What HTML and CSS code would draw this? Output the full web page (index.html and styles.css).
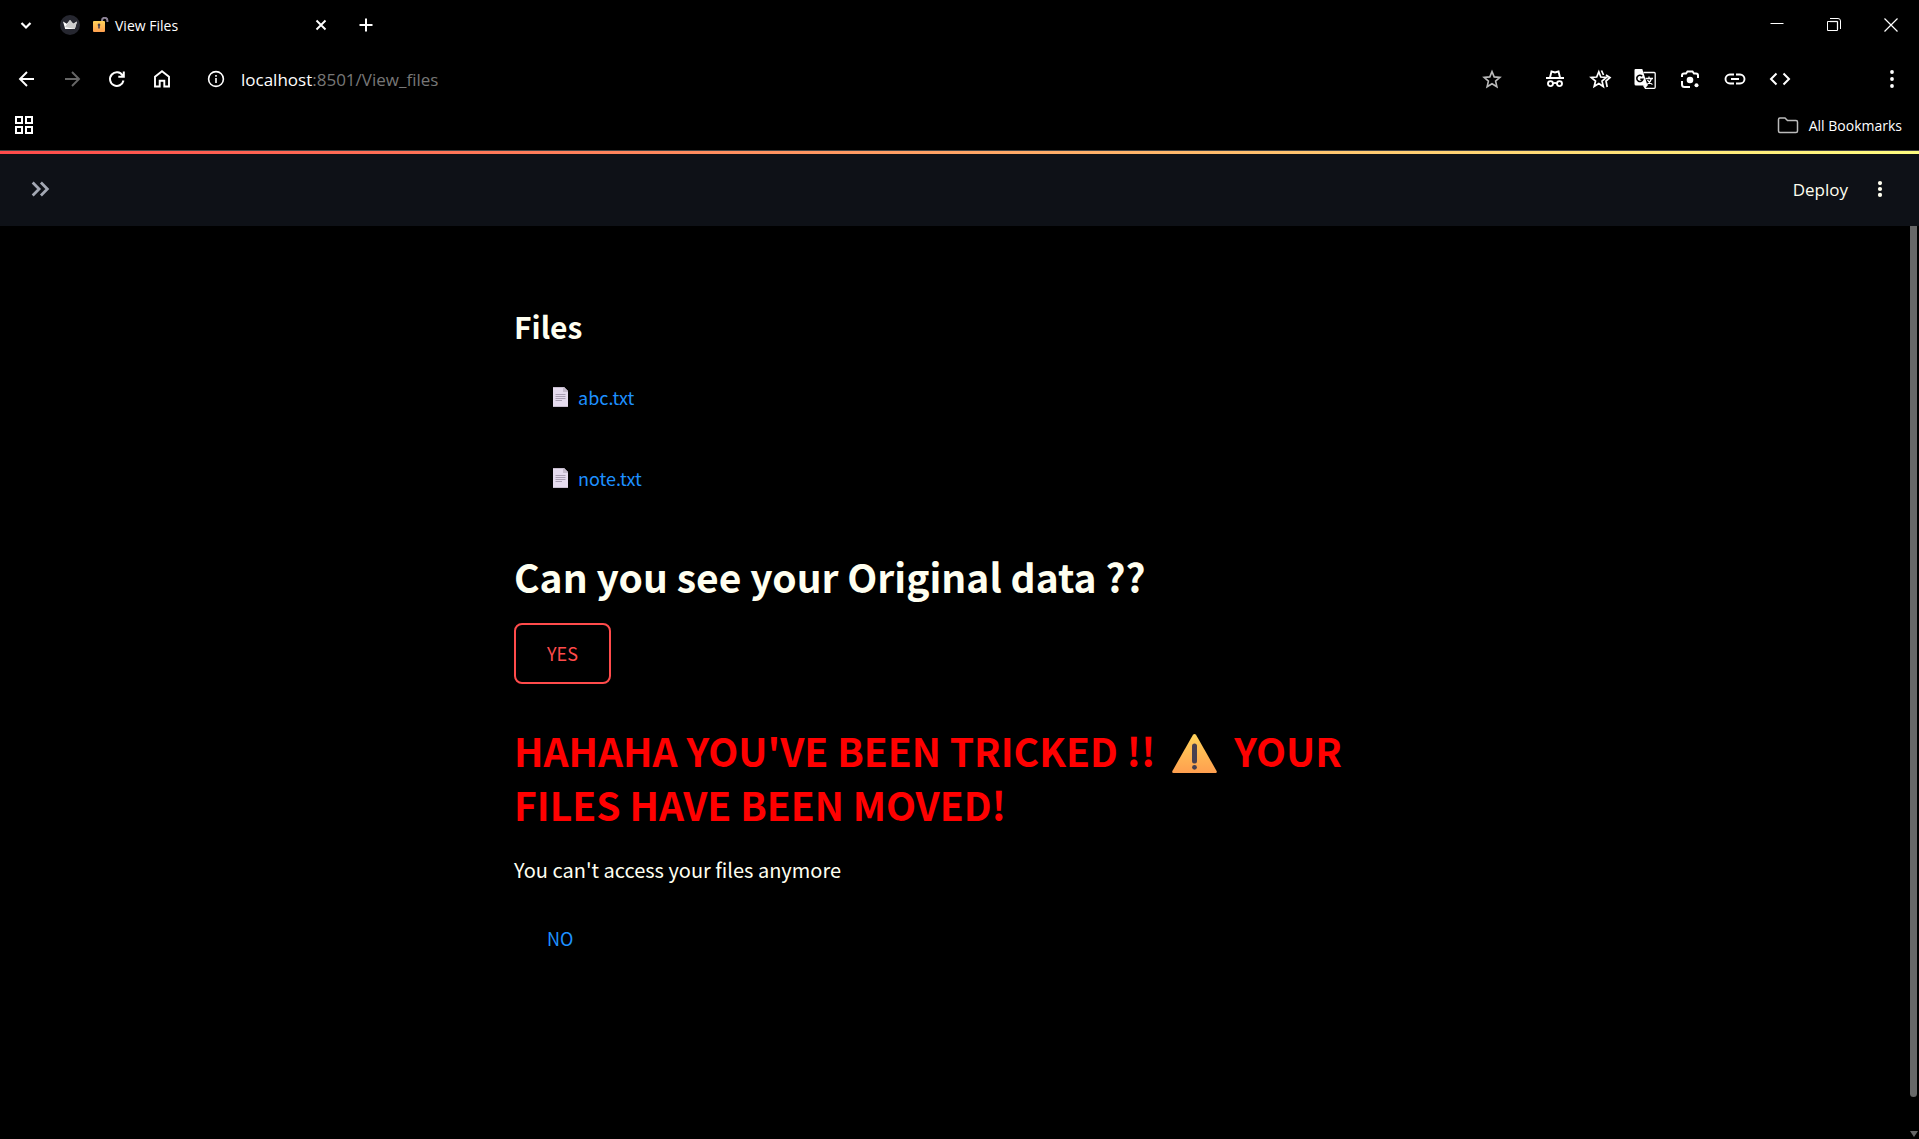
FILE: index.html
```html
<!DOCTYPE html>
<html lang="en">
<head>
<meta charset="utf-8">
<title>View Files</title>
<link rel="stylesheet" href="styles.css">
</head>
<body>
<div class="browser">
  <div class="tabs">
    <button class="icon-btn tab-search" aria-label="Search tabs"><svg viewBox="0 0 24 24"><path d="M7.500 10l4.500 4.500 4.500-4.500" stroke-width="2.200"/></svg></button>
    <div class="tab">
      <svg class="favicon" viewBox="0 0 20 20"><circle class="disc" cx="10" cy="10" r="10"/><path class="crown" d="M3 6.500l3.800 2.300L10 5l3.200 3.800L17 6.500 14.800 14H5.200z"/><path class="crown-shade" d="M10 5l3.200 3.800L17 6.500 14.800 14 5 12z"/></svg>
      <svg class="lock" viewBox="0 0 16 16"><defs><linearGradient id="amber" x1="0" y1="0" x2="0" y2="1"><stop offset="0" stop-color="#ffd35a"/><stop offset="1" stop-color="#ff9f4f"/></linearGradient></defs><path class="shackle" d="M9 5V3.500a2.700 2.700 0 0 1 5.400 0V5"/><rect x="0" y="4" width="12" height="11" rx="1" fill="url(#amber)"/><path class="keyhole" d="M6 6.600a1.400 1.400 0 0 1 .8 2.500v2.500H5.200V9.100A1.400 1.400 0 0 1 6 6.600z"/></svg>
      <span class="tab-title">View Files</span>
      <button class="icon-btn tab-close" aria-label="Close tab"><svg viewBox="0 0 24 24"><path d="M7.500 7.500l9 9M16.500 7.500l-9 9" stroke-width="1.900"/></svg></button>
    </div>
    <button class="icon-btn" aria-label="New tab"><svg viewBox="0 0 24 24"><path d="M12 5.500v13M5.500 12h13" stroke-width="2"/></svg></button>
    <div class="window-controls">
      <button class="window-btn" aria-label="Minimize"><svg viewBox="0 0 24 24"><path d="M5.500 10.500h13" stroke-width="1"/></svg></button>
      <button class="window-btn" aria-label="Restore"><svg viewBox="0 0 24 24"><path d="M15.500 8.500v8M8 8.500h7.500" stroke="#888" stroke-width="1.500"/><path d="M5.500 8.500h10v9h-10zM8 5.500h8q2.500 0 2.500 2.500v8" stroke-width="1"/></svg></button>
      <button class="window-btn" aria-label="Close"><svg viewBox="0 0 24 24"><path d="M5.500 5.500l13 13M18.500 5.500l-13 13" stroke-width="1.200"/></svg></button>
    </div>
  </div>

  <div class="toolbar">
    <button class="icon-btn" aria-label="Back"><svg viewBox="0 0 24 24"><path d="M19 12H5.500M12 5l-7 7 7 7" stroke-width="1.900"/></svg></button>
    <button class="icon-btn dim" aria-label="Forward"><svg viewBox="0 0 24 24"><path d="M5 12h13.500M12 5l7 7-7 7" stroke-width="1.900"/></svg></button>
    <button class="icon-btn" aria-label="Reload"><svg viewBox="0 0 24 24"><path d="M17.600 8.500A6.800 6.800 0 1 0 18.500 13.500M18.800 4.500v5.300h-5.500" stroke-width="2"/></svg></button>
    <button class="icon-btn" aria-label="Home"><svg viewBox="0 0 24 24"><path d="M5 19.500V9.700l7-5.400 7 5.400v9.800h-4.700v-5.700H9.700v5.700z" stroke-width="1.900"/></svg></button>
    <div class="address">
      <button class="icon-btn" aria-label="Site information"><svg viewBox="0 0 24 24"><circle cx="12" cy="12" r="7.400" stroke-width="1.600"/><path d="M12 11v5M12 8v1.700" stroke-width="1.600"/></svg></button>
      <a class="url" href="#"><span class="host">localhost</span>:8501/View_files</a>
      <button class="icon-btn soft" aria-label="Bookmark this page"><svg viewBox="0 0 24 24"><path d="M12 4.600l2.200 5.300 5.700.5-4.300 3.700 1.300 5.600-4.900-3-4.900 3 1.300-5.600-4.300-3.700 5.700-.5z" stroke-width="1.600"/></svg></button>
    </div>
    <div class="extensions">
      <button class="icon-btn" aria-label="Incognito"><svg viewBox="0 0 24 24"><path d="M3 11h18M7 10.500l1.500-6 3.500 1 3.500-1 1.500 6M10 16.500q2-1.200 4 0" stroke-width="1.900"/><circle cx="7.500" cy="16.600" r="2.500" stroke-width="1.900"/><circle cx="16.500" cy="16.600" r="2.500" stroke-width="1.900"/></svg></button>
      <button class="icon-btn" aria-label="Favorites"><svg viewBox="0 0 24 24"><path d="M10.800 4.800l2 5.200 5.500.4-4.300 3.600 1.300 5.500-4.500-3-4.600 3L7.500 14l-4.300-3.600 5.500-.4zM13.500 3.500l2 4.500M18 8l4 2.500-4 3.500 1.200 6" stroke-width="1.700"/></svg></button>
      <button class="icon-btn" aria-label="Translate"><svg viewBox="0 0 24 24"><path d="M10.500 5.500h10.700q1 0 1 1v13.800q0 1-1 1h-8.700l-2-3" stroke-width="1.300"/><path class="solid" d="M2.500 2h6.800l5.200 16.500H3q-1.500 0-1.500-1.500V3.200Q1.500 2 2.500 2zM11 18h4l-3 3.500z"/><path d="M9.200 9.300a3.100 3.100 0 1 0 .7 3H7.300" stroke="#000" stroke-width="1.600"/><path d="M12.500 11.500h7.500M16 9.500v2M18.500 11.500q-1 4-4.500 6M14.500 13q2 3.500 5 4.500" stroke-width="1.300"/></svg></button>
      <button class="icon-btn" aria-label="Search with Lens"><svg viewBox="0 0 24 24"><path d="M4 10V8.500Q4 6.500 6 6.500h2L9.500 4.500h5L16 6.500h2q2 0 2 2V11M4 14v3.500Q4 20 6.500 20H12" stroke-width="2"/><circle class="solid" cx="12" cy="13" r="3.300"/><circle class="solid" cx="18.500" cy="18.300" r="2"/></svg></button>
      <button class="icon-btn" aria-label="Copy link"><svg viewBox="0 0 24 24"><path d="M11 7.500H7a4.500 4.500 0 0 0 0 9h4M13 7.500h4a4.500 4.500 0 0 1 0 9h-4M8 12h8" stroke-width="1.900"/></svg></button>
      <button class="icon-btn" aria-label="View source"><svg viewBox="0 0 24 24"><path d="M8.500 6.500L3 12l5.500 5.500M15.500 6.500L21 12l-5.500 5.500" stroke-width="2"/></svg></button>
    </div>
    <button class="icon-btn menu" aria-label="Browser menu"><svg viewBox="0 0 24 24"><g class="solid"><circle cx="12" cy="5" r="1.900"/><circle cx="12" cy="12" r="1.900"/><circle cx="12" cy="19" r="1.900"/></g></svg></button>
  </div>

  <div class="bookmarks">
    <button class="icon-btn apps" aria-label="Apps"><svg viewBox="0 0 24 24"><path d="M4 4h6v6H4zM14 4h6v6h-6zM4 14h6v6H4zM14 14h6v6h-6z" stroke-width="2"/></svg></button>
    <button class="all-bookmarks"><svg viewBox="0 0 24 24"><path d="M2.500 18V6.500q0-1.500 1.500-1.500h5l2.500 2.500H20q1.500 0 1.500 1.500v9q0 1.500-1.500 1.500H4Q2.500 19.500 2.500 18z" stroke="#bbb" stroke-width="1.500"/></svg>All Bookmarks</button>
  </div>
</div>

<header class="app-header">
  <button class="icon-btn" aria-label="Open sidebar"><svg class="expand" viewBox="0 0 24 24"><path d="M4 5l7 7-7 7M13 5l7 7-7 7" stroke-width="3"/></svg></button>
  <div class="app-actions">
    <button class="deploy">Deploy</button>
    <button class="icon-btn more" aria-label="App menu"><svg viewBox="0 0 24 24"><g class="solid"><circle cx="12" cy="5.500" r="2.300"/><circle cx="12" cy="12" r="2.300"/><circle cx="12" cy="18.500" r="2.300"/></g></svg></button>
  </div>
</header>

<div class="viewport">
  <main class="page">
    <div class="content">
      <h3 class="subheading">Files</h3>
      <ul class="files">
        <li><a href="#"><svg class="doc" viewBox="0 0 15 20"><path fill="#e6dcef" d="M0 0h11l4 4v16H0z"/><path fill="#c6bccd" d="M10 0h1l4 4v1h-5zM0 19h15v1H0zM0 0h11v1H0z"/><path stroke="#aaa0b4" d="M2.500 7.500h10M2.500 9.500h10M2.500 11.500h10M2.500 13.500H9"/></svg>abc.txt</a></li>
        <li><a href="#"><svg class="doc" viewBox="0 0 15 20"><path fill="#e6dcef" d="M0 0h11l4 4v16H0z"/><path fill="#c6bccd" d="M10 0h1l4 4v1h-5zM0 19h15v1H0zM0 0h11v1H0z"/><path stroke="#aaa0b4" d="M2.500 7.500h10M2.500 9.500h10M2.500 11.500h10M2.500 13.500H9"/></svg>note.txt</a></li>
      </ul>
      <h2 class="heading question">Can you see your Original data ??</h2>
      <button class="choice selected">YES</button>
      <h2 class="heading alert">HAHAHA YOU'VE BEEN TRICKED !! <svg class="warning" role="img" aria-label="Warning" viewBox="0 0 45 39"><path fill="url(#amber)" d="M21 .8q1.500-1.500 3 0L44.600 37q.8 2-1.100 2h-42Q-.3 39 .4 37z"/><path d="M22.500 12v15" stroke="#484050" stroke-width="5" stroke-linecap="round"/><circle cx="22.500" cy="33.300" r="2.400" fill="#484050"/></svg> YOUR FILES HAVE BEEN MOVED!</h2>
      <p class="note">You can't access your files anymore</p>
      <button class="choice">NO</button>
    </div>
  </main>
  <div class="scrollbar" aria-hidden="true"><div class="thumb"></div><div class="arrow"></div></div>
</div>
</body>
</html>
```
FILE: styles.css
```css
* { box-sizing: border-box; }

body {
  margin: 0;
  min-height: 100vh;
  display: flex;
  flex-direction: column;
  background: #000;
  color: #fffff0;
  font-family: "Noto Sans CJK SC", sans-serif;
}

button {
  margin: 0;
  padding: 0;
  border: 0;
  background: none;
  color: inherit;
  font: inherit;
}

svg { display: block; flex: none; }

/* Browser chrome */
.browser {
  height: 151px;
  border-bottom: 1px solid #444;
  color: #fff;
  font-family: "Open Sans", sans-serif;
  font-size: 14px;
}

.tabs, .toolbar, .bookmarks { display: flex; align-items: center; }
.tabs { height: 50px; padding-left: 3px; }
.toolbar { height: 58px; padding-left: 4px; padding-right: 5px; }
.bookmarks { height: 34px; padding: 0 17px 0 1px; justify-content: space-between; }

.icon-btn {
  flex: none;
  width: 45px;
  height: 40px;
  display: grid;
  place-items: center;
}
.icon-btn svg, .window-btn svg, .all-bookmarks svg {
  width: 24px;
  height: 24px;
  fill: none;
  stroke: currentColor;
}
.icon-btn svg .solid { fill: currentColor; stroke: none; }
.dim { color: #666; }
.soft { color: #bbb; }

.tab { display: flex; align-items: center; width: 295px; padding-left: 12px; }
.favicon { width: 20px; height: 20px; margin-right: 13px; }
.disc { fill: #262730; }
.crown { fill: #fff; }
.crown-shade { fill: #ccc; }
.lock { width: 16px; height: 16px; margin-right: 6px; }
.shackle { fill: none; stroke: #8c8296; stroke-width: 2; }
.keyhole { fill: #484050; }
.tab-title { flex: 1; }

.window-controls { margin-left: auto; display: flex; }
.window-btn { width: 57px; height: 50px; display: grid; place-items: center; }

.address { flex: 1; display: flex; align-items: center; padding-left: 9px; }
.url { flex: 1; padding-left: 3px; color: #777; text-decoration: none; font-size: 17px; }
.host { color: #fff; }
.extensions { display: flex; padding-left: 18px; }
.menu { margin-left: 67px; }

.all-bookmarks { display: flex; align-items: center; gap: 9px; }

/* Application header */
.app-header {
  height: 75px;
  padding: 3px 17px 2px 17px;
  display: flex;
  align-items: center;
  justify-content: space-between;
  background: linear-gradient(90deg, #ff4b4b, #fffd80) top / 100% 3px no-repeat #0e1117;
}
.app-header .expand { color: #a3a8b4; width: 22px; height: 22px; }
.app-actions { display: flex; align-items: center; gap: 9px; }
.deploy { font-family: "Open Sans", sans-serif; font-size: 17px; }
.app-header .more svg { width: 22px; height: 22px; }

/* Page */
.viewport { flex: 1; display: flex; }
.page { flex: 1; }
.content { max-width: 880px; margin: 0 auto; padding-top: 78px; }

.subheading { margin: 0; font-size: 30px; line-height: 44px; font-weight: 700; }

.files { list-style: none; margin: 19px 0 0; padding: 0 0 0 39px; }
.files li { height: 81px; }
.files a {
  display: inline-flex;
  align-items: center;
  gap: 10px;
  color: #1e90ff;
  text-decoration: none;
  font-size: 18px;
  line-height: 60px;
}
.doc { width: 15px; height: 20px; fill: none; }

.heading { margin: 0; font-size: 39px; line-height: 54px; font-weight: 700; }
.question { margin: 20px 0; }
.alert { margin-top: 39px; color: #f00; }
.warning { display: inline-block; width: 45px; height: 39px; margin: 0 8px; vertical-align: -6px; }

.choice {
  display: block;
  min-width: 97px;
  padding: 0 31px;
  border: 2px solid transparent;
  border-radius: 8px;
  color: #1e90ff;
  font-size: 18px;
  line-height: 57px;
  text-align: left;
}
.selected { border-color: #ff4b4b; color: #ff4b4b; }

.note { margin: 23px 0 22px; font-size: 20px; line-height: 32px; }

.scrollbar {
  width: 11px;
  display: flex;
  flex-direction: column;
  align-items: center;
  justify-content: space-between;
  padding-bottom: 2px;
}
.thumb { width: 7px; height: calc(100% - 40px); background: #686868; border-radius: 0 0 4px 4px; }
.arrow { border: 4px solid transparent; border-top: 6px solid #686868; border-bottom: 0; }
```
